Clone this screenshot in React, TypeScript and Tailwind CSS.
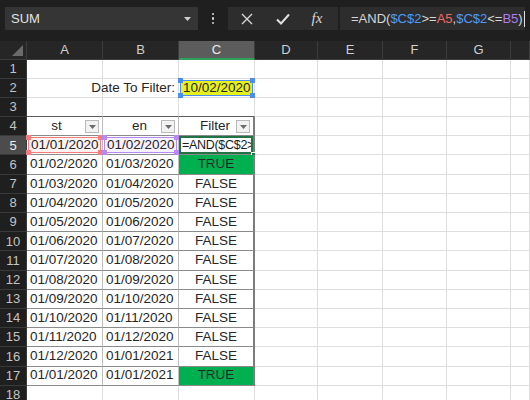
import React from "react";

const COLS = ["A", "B", "C", "D", "E", "F", "G", ""];
const COLW = "27px 76px 76px 76px 63px 65px 64px 64px 1fr";

const data: [string, string, string][] = [
  ["01/01/2020", "01/02/2020", "=AND($C$2>"],
  ["01/02/2020", "01/03/2020", "TRUE"],
  ["01/03/2020", "01/04/2020", "FALSE"],
  ["01/04/2020", "01/05/2020", "FALSE"],
  ["01/05/2020", "01/06/2020", "FALSE"],
  ["01/06/2020", "01/07/2020", "FALSE"],
  ["01/07/2020", "01/08/2020", "FALSE"],
  ["01/08/2020", "01/09/2020", "FALSE"],
  ["01/09/2020", "01/10/2020", "FALSE"],
  ["01/10/2020", "01/11/2020", "FALSE"],
  ["01/11/2020", "01/12/2020", "FALSE"],
  ["01/12/2020", "01/01/2021", "FALSE"],
  ["01/01/2020", "01/01/2021", "TRUE"],
];

const Handles = ({ color }: { color: string }) => (
  <>
    <span className={`absolute -left-[3px] -top-[3px] h-[5px] w-[5px] ${color}`} />
    <span className={`absolute -right-[3px] -top-[3px] h-[5px] w-[5px] ${color}`} />
    <span className={`absolute -left-[3px] -bottom-[3px] h-[5px] w-[5px] ${color}`} />
    <span className={`absolute -right-[3px] -bottom-[3px] h-[5px] w-[5px] ${color}`} />
  </>
);

const FilterBtn = () => (
  <span className="absolute right-[3px] top-[3px] flex h-[13px] w-[14px] items-center justify-center border border-[#b9b9b9] bg-[#f2f2f2]">
    <svg width="7" height="4" viewBox="0 0 7 4">
      <path d="M0 0h7L3.5 4z" fill="#6b6b6b" />
    </svg>
  </span>
);

function Cell({ r, c }: { r: number; c: number }) {
  const base = "relative flex items-center overflow-hidden whitespace-nowrap text-[13.5px] text-[#262626]";
  const grid = "border-r border-b border-[#dedede] bg-white";
  const inTable = r >= 4 && r <= 17 && c <= 2;

  if (r === 2 && c === 1) {
    return (
      <div className={`${base} ${grid} justify-end overflow-visible pr-[3px]`}>
        <span className="absolute right-[3px]">Date To Filter:</span>
      </div>
    );
  }
  if (r === 2 && c === 2) {
    return (
      <div className={`${base} ${grid} overflow-visible p-[1px]`}>
        <div className="relative flex h-full w-full items-center border-[1.5px] border-[#4b8ef0] bg-[#e6f01e] pl-[2px]">
          10/02/2020
          <Handles color="bg-[#4b8ef0]" />
        </div>
      </div>
    );
  }
  if (r === 3 && c <= 2) {
    return <div className={`${base} border-r border-b border-r-[#dedede] border-b-[#5a5a5a] bg-white`} />;
  }
  if (inTable) {
    const tb = `border-b border-[#8a8a8a] ${c === 2 ? "border-r-2 border-r-[#7d7d7d]" : "border-r border-r-[#bdbdbd]"}`;
    if (r === 4) {
      const label = ["st", "en", "Filter"][c];
      return (
        <div className={`${base} ${tb} bg-white justify-center ${c === 0 ? "pr-[16px]" : "pr-[2px]"}`}>
          {label}
          <FilterBtn />
        </div>
      );
    }
    const row = data[r - 5];
    const val = row[c];
    if (r === 5 && c === 0) {
      return (
        <div className={`${base} ${tb} overflow-visible bg-white p-[1px]`}>
          <div className="relative flex h-full w-full items-center border-[1.5px] border-[#f47c7c] bg-[#fdf2f2] pl-[2px]">
            {val}
            <Handles color="bg-[#f47c7c]" />
          </div>
        </div>
      );
    }
    if (r === 5 && c === 1) {
      return (
        <div className={`${base} ${tb} overflow-visible bg-white p-[1px]`}>
          <div className="relative flex h-full w-full items-center border-[1.5px] border-[#b68af2] bg-[#f7f1fe] pl-[2px]">
            {val}
            <Handles color="bg-[#b68af2]" />
          </div>
        </div>
      );
    }
    if (r === 5 && c === 2) {
      return (
        <div className={`${base} ${tb} overflow-visible bg-white`}>
          <div className="relative flex h-full w-full items-center overflow-hidden border-2 border-[#217346] bg-white pl-[1px] text-[12.5px] tracking-[-0.3px] text-[#1a1a1a]">
            {val}
          </div>
          <span className="absolute -bottom-[3px] -right-[3px] h-[5px] w-[5px] border border-white bg-[#217346]" />
        </div>
      );
    }
    if (c === 2) {
      const isTrue = val === "TRUE";
      return (
        <div className={`${base} ${tb} justify-center ${isTrue ? "bg-[#00b050] text-[#143a1c]" : "bg-white"}`}>
          {val}
        </div>
      );
    }
    return <div className={`${base} ${tb} bg-white pl-[3px]`}>{val}</div>;
  }
  return <div className={`${base} ${grid}`} />;
}

export default function App() {
  const rows = Array.from({ length: 18 }, (_, i) => i + 1);
  return (
    <div
      className="flex h-[400px] w-[530px] flex-col overflow-hidden bg-[#1f1f1f]"
      style={{ fontFamily: '"Liberation Sans", Arial, sans-serif' }}
    >
      {/* formula bar */}
      <div className="flex h-[41px] shrink-0 items-center bg-[#1f1f1f] pb-[4px] pl-[5px]">
        <div className="flex h-[23px] w-[193px] items-center justify-between bg-[#353535] pl-[6px] pr-[7px] text-[13px] text-[#e2e2e2]">
          <span>SUM</span>
          <svg width="7" height="4" viewBox="0 0 7 4">
            <path d="M0 0h7L3.5 4z" fill="#d0d0d0" />
          </svg>
        </div>
        <div className="flex w-[30px] flex-col items-center justify-center gap-[2px]">
          <span className="h-[2.5px] w-[2.5px] rounded-full bg-[#d8d8d8]" />
          <span className="h-[2.5px] w-[2.5px] rounded-full bg-[#d8d8d8]" />
          <span className="h-[2.5px] w-[2.5px] rounded-full bg-[#d8d8d8]" />
        </div>
        <div className="flex h-[23px] w-[110px] items-center bg-[#2d2d2d] text-[#d8d8d8]">
          <div className="flex w-[38px] justify-center">
            <svg width="12" height="12" viewBox="0 0 12 12">
              <path d="M1 1L11 11M11 1L1 11" stroke="#d8d8d8" strokeWidth="1.4" />
            </svg>
          </div>
          <div className="flex w-[34px] justify-center">
            <svg width="14" height="12" viewBox="0 0 14 12">
              <path d="M1 6.5L5 10.5L13 1.5" stroke="#e0e0e0" strokeWidth="2" fill="none" />
            </svg>
          </div>
          <div
            className="flex w-[34px] justify-center text-[15px] italic text-[#d8d8d8]"
            style={{ fontFamily: '"Liberation Serif", serif' }}
          >
            fx
          </div>
        </div>
        <div className="ml-[2px] flex h-[23px] w-[185px] items-center bg-[#2d2d2d] pl-[11px] text-[13px] text-[#d6d6d6]">
          <span>=AND(</span>
          <span className="text-[#4d9cf5]">$C$2</span>
          <span>&gt;=</span>
          <span className="text-[#f06a6a]">A5</span>
          <span>,</span>
          <span className="text-[#4d9cf5]">$C$2</span>
          <span>&lt;=</span>
          <span className="text-[#b07cf0]">B5</span>
          <span>)</span>
          <span className="ml-[1px] h-[16px] w-[1px] bg-[#e0e0e0]" />
        </div>
      </div>

      {/* sheet */}
      <div
        className="grid"
        style={{
          gridTemplateColumns: COLW,
          gridTemplateRows: `18.5px repeat(18, 19.2px)`,
        }}
      >
        <div className="relative border-r border-b border-[#3c3c3c] bg-[#262626]">
          <svg className="absolute bottom-[3px] right-[3px]" width="11" height="11" viewBox="0 0 11 11">
            <path d="M11 0V11H0z" fill="#6a6a6a" />
          </svg>
        </div>
        {COLS.map((c, i) => (
          <div
            key={"h" + i}
            className={`flex items-center justify-center text-[13px] ${
              c === "C"
                ? "border-b-2 border-r border-b-[#2fa15a] border-r-[#3c3c3c] bg-[#5c5c5c] text-[#ececec]"
                : "border-r border-b border-[#3c3c3c] bg-[#262626] text-[#cfcfcf]"
            }`}
          >
            {c}
          </div>
        ))}
        {rows.map((r) => (
          <React.Fragment key={r}>
            <div
              className={`flex items-center justify-center border-b border-r border-[#3a3a3a] text-[13px] ${
                r === 5 ? "bg-[#4c4c4c] text-[#ececec]" : "bg-[#1f1f1f] text-[#c4c4c4]"
              }`}
            >
              {r}
            </div>
            {COLS.map((_, c) => (
              <Cell key={c} r={r} c={c} />
            ))}
          </React.Fragment>
        ))}
      </div>
    </div>
  );
}
